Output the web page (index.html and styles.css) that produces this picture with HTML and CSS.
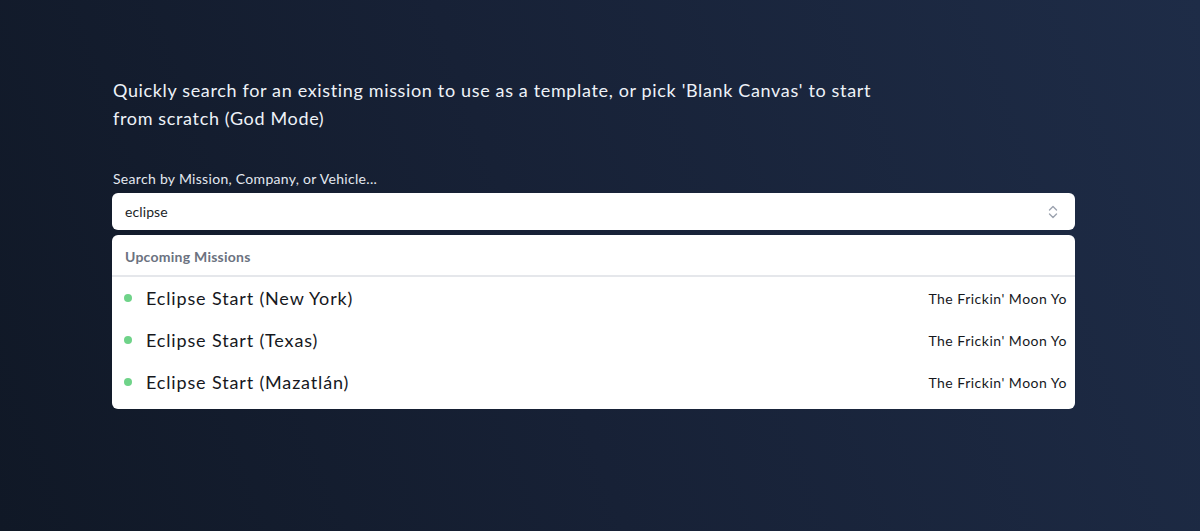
FILE: index.html
```html
<!DOCTYPE html>
<html lang="en">
<head>
<meta charset="utf-8">
<title>Mission Search</title>
<link rel="stylesheet" href="styles.css">
</head>
<body>
<main class="page">
  <p class="intro">Quickly search for an existing mission to use as a template, or pick 'Blank Canvas' to start from scratch (God Mode)</p>
  <label class="label" for="search">Search by Mission, Company, or Vehicle...</label>
  <div class="input">
    <span class="value">eclipse</span>
    <svg class="chevrons" width="12" height="16" viewBox="0 0 12 16" aria-hidden="true">
      <path d="M2.5 6 L6 2.5 L9.5 6" fill="none" stroke="#9ca3af" stroke-width="1.4" stroke-linecap="round" stroke-linejoin="round"/>
      <path d="M2.5 10 L6 13.5 L9.5 10" fill="none" stroke="#9ca3af" stroke-width="1.4" stroke-linecap="round" stroke-linejoin="round"/>
    </svg>
  </div>
  <div class="dropdown">
    <div class="group-title">Upcoming Missions</div>
    <ul class="options">
      <li class="option"><span class="dot"></span><span class="name">Eclipse Start (New York)</span><span class="target">The Frickin' Moon Yo</span></li>
      <li class="option"><span class="dot"></span><span class="name">Eclipse Start (Texas)</span><span class="target">The Frickin' Moon Yo</span></li>
      <li class="option"><span class="dot"></span><span class="name">Eclipse Start (Mazatlán)</span><span class="target">The Frickin' Moon Yo</span></li>
    </ul>
  </div>
</main>
</body>
</html>
```
FILE: styles.css
```css
html, body {
  margin: 0;
  height: 100%;
}
body {
  background: linear-gradient(70deg, #101826 0%, #172136 45%, #1e2c47 100%);
  font-family: "Lato", "Noto Sans", sans-serif;
  color: #e8edf5;
  overflow: hidden;
}
.page {
  width: 963px;
  margin-left: 112px;
  padding-top: 76px;
}
.intro {
  margin: 0 0 38px 1px;
  width: 770px;
  font-size: 18px;
  line-height: 28px;
  letter-spacing: 0.65px;
  color: #eef2f8;
}
.label {
  display: block;
  margin-left: 1px;
  font-size: 14px;
  line-height: 18px;
  letter-spacing: 0.3px;
  color: #e3e8f0;
  margin-bottom: 5px;
}
.input {
  height: 37px;
  background: #fff;
  border-radius: 6px;
  display: flex;
  align-items: center;
  justify-content: space-between;
  padding: 0 16px 0 13px;
  box-sizing: border-box;
}
.value {
  font-size: 14px;
  letter-spacing: 0.1px;
  color: #1b1f27;
}
.chevrons {
  display: block;
}
.dropdown {
  margin-top: 5px;
  background: #fff;
  border-radius: 6px;
  overflow: hidden;
  padding-bottom: 6px;
}
.group-title {
  height: 42px;
  box-sizing: border-box;
  padding: 13px 13px 0;
  font-size: 14px;
  font-weight: 700;
  letter-spacing: 0.25px;
  color: #6b7280;
  border-bottom: 2px solid #e5e7eb;
}
.options {
  list-style: none;
  margin: 0;
  padding: 0;
}
.option {
  height: 42px;
  display: flex;
  align-items: center;
  padding: 0 8px 0 12px;
  color: #16181d;
}
.dot {
  width: 8px;
  height: 8px;
  border-radius: 50%;
  background: #6fd389;
  margin-right: 14px;
  flex: none;
}
.name {
  font-size: 18px;
  letter-spacing: 0.85px;
  flex: 1;
}
.target {
  font-size: 14px;
  letter-spacing: 0.5px;
}
```
